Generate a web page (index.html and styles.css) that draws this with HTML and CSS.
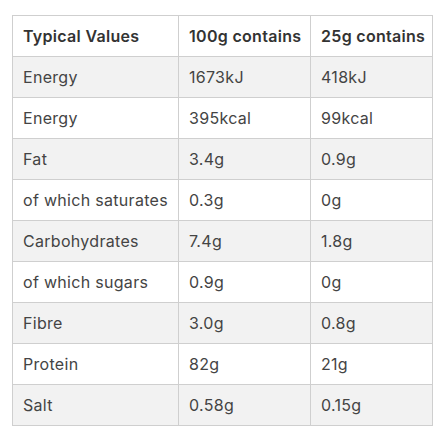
FILE: index.html
```html
<!DOCTYPE html>
<html lang="en">
  <head>
    <meta charset="UTF-8" />
    <meta name="viewport" content="width=device-width, initial-scale=1.0" />
    <title>Nutrition</title>
    <link rel="stylesheet" href="styles.css">
  </head>
  <body>
    <table class="nutrition">
      <thead>
        <tr>
          <th class="label">Typical Values</th>
          <th class="per100">100g contains</th>
          <th class="per25">25g contains</th>
        </tr>
      </thead>
      <tbody>
        <tr><td>Energy</td><td>1673kJ</td><td>418kJ</td></tr>
        <tr><td>Energy</td><td>395kcal</td><td>99kcal</td></tr>
        <tr><td>Fat</td><td>3.4g</td><td>0.9g</td></tr>
        <tr><td>of which saturates</td><td>0.3g</td><td>0g</td></tr>
        <tr><td>Carbohydrates</td><td>7.4g</td><td>1.8g</td></tr>
        <tr><td>of which sugars</td><td>0.9g</td><td>0g</td></tr>
        <tr><td>Fibre</td><td>3.0g</td><td>0.8g</td></tr>
        <tr><td>Protein</td><td>82g</td><td>21g</td></tr>
        <tr><td>Salt</td><td>0.58g</td><td>0.15g</td></tr>
      </tbody>
    </table>
  </body>
</html>
```

FILE: styles.css
```css
body {
  margin: 0;
  padding: 15px 12px;
  background-color: #fff;
  font-family: Inter, sans-serif;
  color: #444;
}

.nutrition {
  border-collapse: collapse;
  width: 421px;
  table-layout: fixed;
  font-size: 16px;
  letter-spacing: 0.3px;
}

.nutrition th,
.nutrition td {
  border: 1px solid #cfcfcf;
  height: 41px;
  padding: 0 4px 0 10px;
  text-align: left;
  vertical-align: middle;
  white-space: nowrap;
  box-sizing: border-box;
}

.nutrition th {
  font-weight: 600;
  color: #333;
}

.label {
  width: 166px;
}

.per100 {
  width: 132px;
}

.nutrition tbody tr:nth-child(odd) {
  background-color: #f2f2f2;
}
```
